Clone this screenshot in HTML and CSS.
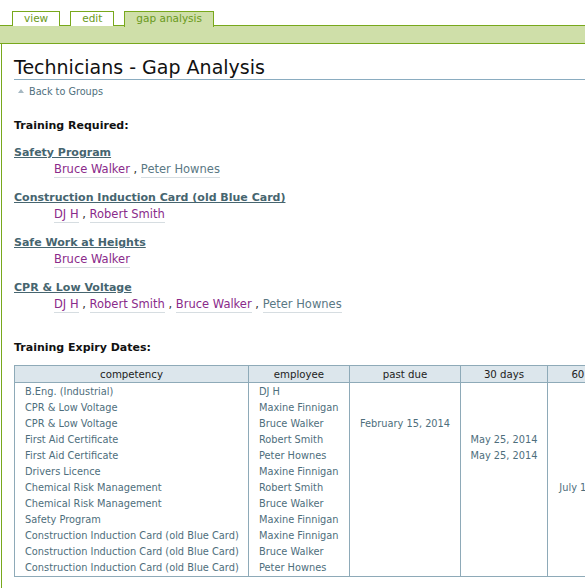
FILE: index.html
```html
<!DOCTYPE html>
<html>
<head>
<meta charset="utf-8">
<link rel="stylesheet" href="styles.css">
</head>
<body>
<div class="tabs">
  <a class="tab">view</a>
  <a class="tab">edit</a>
  <a class="tab active">gap analysis</a>
</div>
<div class="bar"></div>
<div class="content">
  <h1 class="title">Technicians - Gap Analysis</h1>
  <div class="back"><span class="tri"></span>Back to Groups</div>
  <h3 class="section">Training Required:</h3>
  <div class="req">
    <a class="comp">Safety Program</a>
    <div class="names"><a class="p">Bruce Walker</a> , <a class="g">Peter Hownes</a></div>
  </div>
  <div class="req">
    <a class="comp">Construction Induction Card (old Blue Card)</a>
    <div class="names"><a class="p">DJ H</a> , <a class="p">Robert Smith</a></div>
  </div>
  <div class="req">
    <a class="comp">Safe Work at Heights</a>
    <div class="names"><a class="p">Bruce Walker</a></div>
  </div>
  <div class="req">
    <a class="comp">CPR &amp; Low Voltage</a>
    <div class="names"><a class="p">DJ H</a> , <a class="p">Robert Smith</a> , <a class="p">Bruce Walker</a> , <a class="g">Peter Hownes</a></div>
  </div>
  <h3 class="section exp">Training Expiry Dates:</h3>
  <table class="grid">
    <colgroup>
      <col class="c1"><col class="c2"><col class="c3"><col class="c4"><col class="c5">
    </colgroup>
    <thead>
      <tr><th>competency</th><th>employee</th><th>past due</th><th>30 days</th><th>60 days</th></tr>
    </thead>
    <tbody>
      <tr class="first"><td>B.Eng. (Industrial)</td><td>DJ H</td><td></td><td></td><td></td></tr>
      <tr><td>CPR &amp; Low Voltage</td><td>Maxine Finnigan</td><td></td><td></td><td></td></tr>
      <tr><td>CPR &amp; Low Voltage</td><td>Bruce Walker</td><td class="ctr">February 15, 2014</td><td></td><td></td></tr>
      <tr><td>First Aid Certificate</td><td>Robert Smith</td><td></td><td class="ctr">May 25, 2014</td><td></td></tr>
      <tr><td>First Aid Certificate</td><td>Peter Hownes</td><td></td><td class="ctr">May 25, 2014</td><td></td></tr>
      <tr><td>Drivers Licence</td><td>Maxine Finnigan</td><td></td><td></td><td></td></tr>
      <tr><td>Chemical Risk Management</td><td>Robert Smith</td><td></td><td></td><td class="ctr">July 16, 2014</td></tr>
      <tr><td>Chemical Risk Management</td><td>Bruce Walker</td><td></td><td></td><td></td></tr>
      <tr><td>Safety Program</td><td>Maxine Finnigan</td><td></td><td></td><td></td></tr>
      <tr><td>Construction Induction Card (old Blue Card)</td><td>Maxine Finnigan</td><td></td><td></td><td></td></tr>
      <tr><td>Construction Induction Card (old Blue Card)</td><td>Bruce Walker</td><td></td><td></td><td></td></tr>
      <tr class="last"><td>Construction Induction Card (old Blue Card)</td><td>Peter Hownes</td><td></td><td></td><td></td></tr>
    </tbody>
  </table>
</div>
</body>
</html>
```
FILE: styles.css
```css
html, body {
  margin: 0;
  padding: 0;
  background: #fff;
  overflow: hidden;
}
body {
  font-family: "DejaVu Sans", Verdana, sans-serif;
  font-size: 11px;
  color: #222;
  width: 640px;
}
.tabs {
  display: flex;
  padding: 11px 0 0 12px;
  gap: 10px;
  height: 14px;
}
.tab {
  display: block;
  box-sizing: border-box;
  height: 15px;
  border: 1px solid #78a81c;
  border-bottom: none;
  background: #fff;
  color: #6a9a20;
  font-size: 10.5px;
  line-height: 13px;
  text-align: center;
  padding: 0 11px;
  position: relative;
  z-index: 1;
}
.tab.active {
  background: #cfdfa9;
  height: 16px;
}
.bar {
  height: 17px;
  background: #cfdfa9;
  border-top: 1px solid #78a81c;
  border-bottom: 1px solid #78a81c;
}
.content {
  border-left: 1px solid #78a81c;
  margin-left: 1px;
  padding: 12px 0 40px 12px;
}
.title {
  margin: 0;
  font-weight: normal;
  font-size: 19px;
  line-height: 22px;
  color: #111;
  border-bottom: 1px solid #8aacc0;
  padding-bottom: 1px;
}
.back {
  margin-top: 4px;
  margin-left: 4px;
  font-size: 9.7px;
  color: #4f6f7d;
  display: flex;
  align-items: center;
  height: 14px;
}
.tri {
  display: inline-block;
  width: 0;
  height: 0;
  border-left: 3px solid transparent;
  border-right: 3px solid transparent;
  border-bottom: 4px solid #a5b8c2;
  margin-right: 5px;
}
.section {
  margin: 21px 0 0 0;
  font-size: 11px;
  font-weight: bold;
  color: #111;
  line-height: 14px;
}
.req {
  margin-top: 13px;
}
.req + .req {
  margin-top: 14px;
}
.comp {
  display: inline-block;
  font-size: 11px;
  font-weight: bold;
  color: #46656f;
  text-decoration: underline;
  line-height: 14px;
}
.names {
  margin-top: 1px;
  margin-left: 40px;
  font-size: 11.5px;
  color: #333;
  line-height: 16px;
}
.names a {
  border-bottom: 1px solid #d6dde1;
  padding-bottom: 1px;
}
.p { color: #8a2a8a; }
.g { color: #5a7884; }
.exp {
  margin-top: 29px;
}
.grid {
  margin-top: 10px;
  border-collapse: collapse;
  table-layout: fixed;
  width: 621px;
  font-size: 9.8px;
  color: #4e6e7c;
}
.grid th {
  background: #dce6ec;
  border: 1px solid #8eaab8;
  font-weight: normal;
  font-size: 10.2px;
  color: #222;
  height: 16px;
  padding: 0;
  line-height: 15px;
}
.grid td {
  border-left: 1px solid #8eaab8;
  border-right: 1px solid #8eaab8;
  padding: 0 0 0 10px;
  height: 16px;
  line-height: 16px;
  white-space: nowrap;
  overflow: hidden;
}
.grid td.ctr { text-align: center; padding: 0; }
.grid tr.first td { padding-top: 1px; }
.grid tr.last td { border-bottom: 1px solid #8eaab8; }
.c1 { width: 234px; }
.c2 { width: 101px; }
.c3 { width: 111px; }
.c4 { width: 87px; }
.c5 { width: 88px; }
```
